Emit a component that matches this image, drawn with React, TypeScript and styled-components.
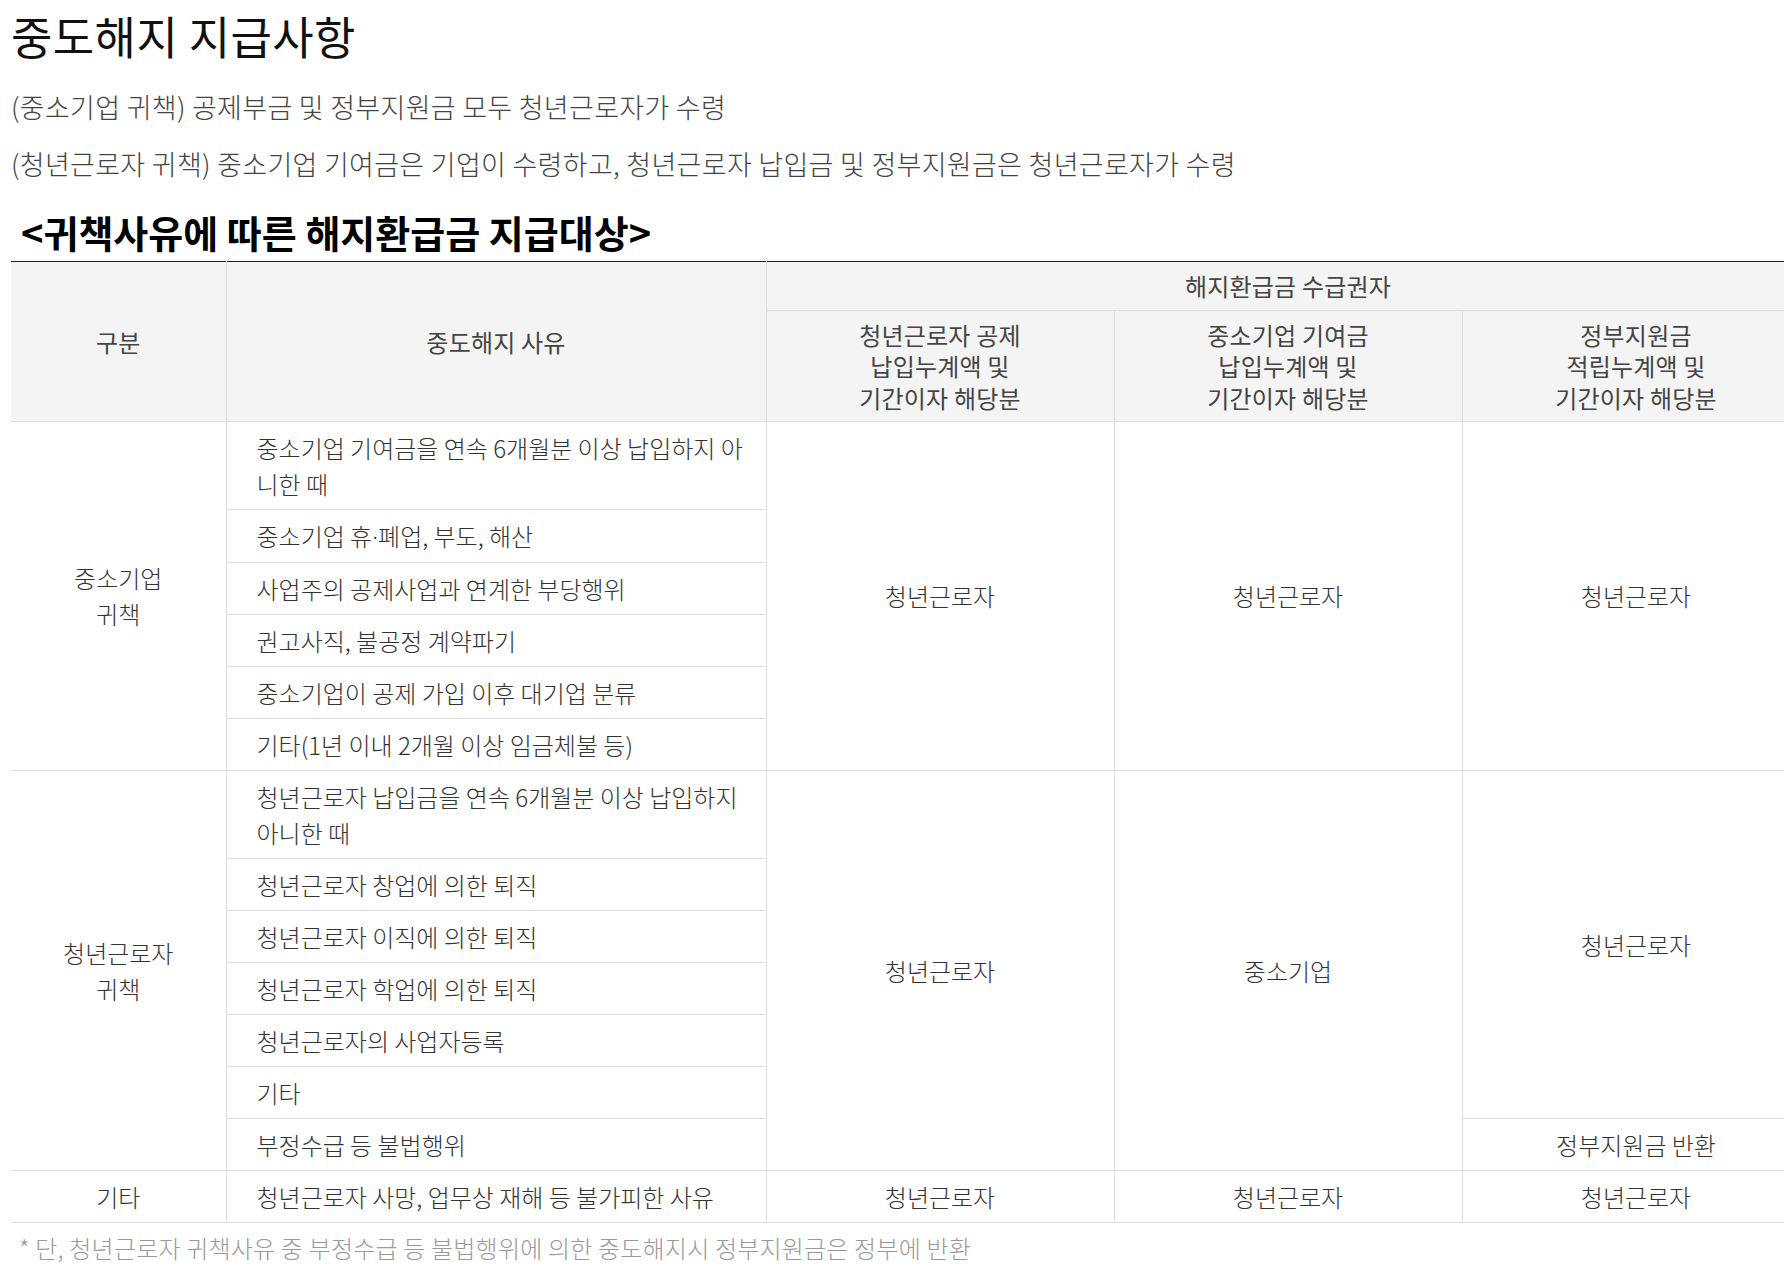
import React from "react";
import styled, { createGlobalStyle } from "styled-components";

const GlobalStyle = createGlobalStyle`
  html, body {
    margin: 0;
    padding: 0;
    background: #ffffff;
  }
  body {
    font-family: "Noto Sans CJK KR", "Noto Sans", sans-serif;
    color: #333;
  }
`;

const Page = styled.div`
  padding: 11px 0 20px 11px;
  width: 1799px;
`;

const Title = styled.h2`
  margin: 0;
  font-size: 45px;
  line-height: 50px;
  font-weight: 400;
  color: #111;
  letter-spacing: 0.4px;
`;

const Desc = styled.p<{ $first?: boolean }>`
  margin: ${(p) => (p.$first ? "28px" : "21px")} 0 0;
  font-size: 27px;
  line-height: 36px;
  font-weight: 300;
  color: #444;
  letter-spacing: 0.3px;
`;

const SubTitle = styled.h3`
  margin: 30px 0 0;
  padding-left: 10px;
  font-size: 38px;
  line-height: 40px;
  font-weight: 700;
  color: #000;
  letter-spacing: 0;
`;

const Table = styled.table`
  margin-top: 9px;
  width: 1799px;
  table-layout: fixed;
  border-collapse: collapse;
  border-top: 1px solid #222;
`;

const Th = styled.th`
  background: #f4f4f4;
  border: 1px solid #dddddd;
  border-top: none;
  padding: 8px 6px;
  font-size: 24px;
  line-height: 31.5px;
  font-weight: 400;
  color: #444;
  letter-spacing: 0.2px;
  text-align: center;
  vertical-align: middle;
  &:first-child {
    border-left: none;
  }
`;

const Td = styled.td<{ $left?: boolean }>`
  border: 1px solid #dddddd;
  padding: 7.5px ${(p) => (p.$left ? "10px 7.5px 30px" : "6px")};
  font-size: 24px;
  line-height: 36px;
  font-weight: 300;
  color: #333;
  letter-spacing: 0;
  text-align: ${(p) => (p.$left ? "left" : "center")};
  vertical-align: middle;
  &:first-child {
    border-left: none;
  }
`;

const Dot = styled.span`
  font-family: "Noto Sans", "Liberation Sans", sans-serif;
`;

const Note = styled.p`
  margin: 7px 0 0;
  padding-left: 8px;
  font-size: 24px;
  line-height: 36px;
  font-weight: 300;
  color: #999;
  letter-spacing: 0.2px;
`;

const smeReasons: React.ReactNode[] = [
  "중소기업 기여금을 연속 6개월분 이상 납입하지 아니한 때",
  <>
    중소기업 휴<Dot>·</Dot>폐업, 부도, 해산
  </>,
  "사업주의 공제사업과 연계한 부당행위",
  "권고사직, 불공정 계약파기",
  "중소기업이 공제 가입 이후 대기업 분류",
  "기타(1년 이내 2개월 이상 임금체불 등)",
];

const youthReasons = [
  "청년근로자 납입금을 연속 6개월분 이상 납입하지 아니한 때",
  "청년근로자 창업에 의한 퇴직",
  "청년근로자 이직에 의한 퇴직",
  "청년근로자 학업에 의한 퇴직",
  "청년근로자의 사업자등록",
  "기타",
  "부정수급 등 불법행위",
];

export default function App() {
  return (
    <>
      <GlobalStyle />
      <Page>
        <Title>중도해지 지급사항</Title>
        <Desc $first>(중소기업 귀책) 공제부금 및 정부지원금 모두 청년근로자가 수령</Desc>
        <Desc>
          (청년근로자 귀책) 중소기업 기여금은 기업이 수령하고, 청년근로자 납입금 및 정부지원금은 청년근로자가 수령
        </Desc>
        <SubTitle>&lt;귀책사유에 따른 해지환급금 지급대상&gt;</SubTitle>
        <Table>
          <colgroup>
            <col style={{ width: 215 }} />
            <col style={{ width: 540 }} />
            <col style={{ width: 348 }} />
            <col style={{ width: 348 }} />
            <col style={{ width: 348 }} />
          </colgroup>
          <thead>
            <tr>
              <Th rowSpan={2}>구분</Th>
              <Th rowSpan={2}>중도해지 사유</Th>
              <Th colSpan={3}>해지환급금 수급권자</Th>
            </tr>
            <tr>
              <Th>
                청년근로자 공제
                <br />
                납입누계액 및
                <br />
                기간이자 해당분
              </Th>
              <Th>
                중소기업 기여금
                <br />
                납입누계액 및
                <br />
                기간이자 해당분
              </Th>
              <Th>
                정부지원금
                <br />
                적립누계액 및
                <br />
                기간이자 해당분
              </Th>
            </tr>
          </thead>
          <tbody>
            {smeReasons.map((r, i) => (
              <tr key={`sme-${i}`}>
                {i === 0 && (
                  <Td rowSpan={smeReasons.length}>
                    중소기업
                    <br />
                    귀책
                  </Td>
                )}
                <Td $left>{r}</Td>
                {i === 0 && (
                  <>
                    <Td rowSpan={smeReasons.length}>청년근로자</Td>
                    <Td rowSpan={smeReasons.length}>청년근로자</Td>
                    <Td rowSpan={smeReasons.length}>청년근로자</Td>
                  </>
                )}
              </tr>
            ))}
            {youthReasons.map((r, i) => (
              <tr key={`youth-${i}`}>
                {i === 0 && (
                  <Td rowSpan={youthReasons.length}>
                    청년근로자
                    <br />
                    귀책
                  </Td>
                )}
                <Td $left>{r}</Td>
                {i === 0 && (
                  <>
                    <Td rowSpan={youthReasons.length}>청년근로자</Td>
                    <Td rowSpan={youthReasons.length}>중소기업</Td>
                    <Td rowSpan={youthReasons.length - 1}>청년근로자</Td>
                  </>
                )}
                {i === youthReasons.length - 1 && <Td>정부지원금 반환</Td>}
              </tr>
            ))}
            <tr>
              <Td>기타</Td>
              <Td $left>청년근로자 사망, 업무상 재해 등 불가피한 사유</Td>
              <Td>청년근로자</Td>
              <Td>청년근로자</Td>
              <Td>청년근로자</Td>
            </tr>
          </tbody>
        </Table>
        <Note>* 단, 청년근로자 귀책사유 중 부정수급 등 불법행위에 의한 중도해지시 정부지원금은 정부에 반환</Note>
      </Page>
    </>
  );
}
